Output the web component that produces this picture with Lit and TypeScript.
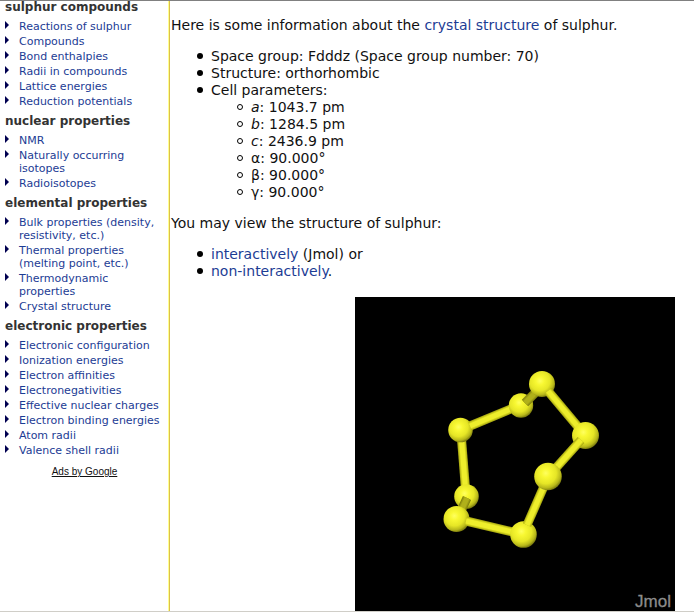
import { LitElement, html, css, svg } from "lit";
import { customElement } from "lit/decorators.js";

const SECTIONS = [
  {
    title: "sulphur compounds",
    links: ["Reactions of sulphur", "Compounds", "Bond enthalpies", "Radii in compounds", "Lattice energies", "Reduction potentials"],
  },
  {
    title: "nuclear properties",
    links: ["NMR", "Naturally occurring isotopes", "Radioisotopes"],
  },
  {
    title: "elemental properties",
    links: ["Bulk properties (density, resistivity, etc.)", "Thermal properties (melting point, etc.)", "Thermodynamic properties", "Crystal structure"],
  },
  {
    title: "electronic properties",
    links: ["Electronic configuration", "Ionization energies", "Electron affinities", "Electronegativities", "Effective nuclear charges", "Electron binding energies", "Atom radii", "Valence shell radii"],
  },
];

@customElement("side-nav")
class SideNav extends LitElement {
  static styles = css`
    :host { display: block; }
    .title {
      margin: 6px 0;
      padding-left: 5px;
      font-size: 12px;
      line-height: 14px;
      font-weight: bold;
      color: #333;
    }
    .section:first-child .title { margin-top: -1px; }
    .list {
      display: flex;
      flex-direction: column;
      gap: 2px;
      margin: 0;
      padding: 0 5px;
      list-style: none;
      font-size: 11px;
      line-height: 13px;
    }
    .item { display: flex; gap: 10px; }
    .arrow { flex: none; width: 4px; height: 8px; margin-top: 1px; fill: #000050; }
    a { color: #1c3c94; text-decoration: none; }
    .ads { margin: 9px 0 0; text-align: center; font: 10px/12px "Liberation Sans", Arial, sans-serif; }
    .ads a { color: #111; text-decoration: underline; }
  `;
  render() {
    return html`<nav>
        ${SECTIONS.map(
          (s) => html`<section class="section">
            <h2 class="title">${s.title}</h2>
            <ul class="list">
              ${s.links.map(
                (l) => html`<li class="item">
                  <svg class="arrow" viewBox="0 0 4 8" aria-hidden="true"><path d="M0 0L4 4L0 8Z" /></svg>
                  <a href="#">${l}</a>
                </li>`
              )}
            </ul>
          </section>`
        )}
      </nav>
      <p class="ads"><a href="#">Ads by Google</a></p>`;
  }
}

type Point = [number, number];

@customElement("molecule-view")
class MoleculeView extends LitElement {
  static styles = css`
    :host { display: block; max-width: 320px; flex: 1; }
    .scene { display: block; width: 100%; background: #000; }
    .label { font: 17px "Liberation Sans", Arial, sans-serif; fill: #8c8c8c; stroke: #8c8c8c; stroke-width: 0.3; }
  `;
  atom([x, y]: Point, r: number) {
    return svg`<circle cx=${x} cy=${y} r=${r} fill="url(#ball)" />`;
  }
  bond([x1, y1]: Point, [x2, y2]: Point, w: number, tones = ["#b0b014", "#d2d21e", "#eeee2c"]) {
    return tones.map(
      (tone, i) => svg`<line x1=${x1} y1=${y1} x2=${x2} y2=${y2} stroke=${tone} stroke-width=${w - i * 2} />`
    );
  }
  render() {
    const shaded = ["#84840e", "#9c9c14", "#b0b01a"];
    // Painted from the farthest atom to the nearest one.
    return html`<svg class="scene" viewBox="0 0 320 314" role="img" aria-label="Ring of eight sulphur atoms">
      <defs>
        <radialGradient id="ball" cx="0.42" cy="0.38" r="0.64">
          <stop offset="0" stop-color="#ffff60" />
          <stop offset="0.25" stop-color="#f8f832" />
          <stop offset="0.6" stop-color="#e6e626" />
          <stop offset="0.84" stop-color="#b8b81a" />
          <stop offset="1" stop-color="#74740e" />
        </radialGradient>
      </defs>
      ${this.bond([106.5, 142], [110.5, 192], 9)}
      ${this.atom([111.5, 199.5], 12.3)}
      ${this.bond([112, 201], [106, 214], 9, shaded)}
      ${this.atom([105.5, 133], 12.3)}
      ${this.bond([115, 129], [158, 111], 9)}
      ${this.atom([166, 108.5], 12.2)}
      ${this.bond([170, 106], [184, 92], 9, shaded)}
      ${this.atom([101.5, 222], 13)}
      ${this.bond([111, 224], [162, 236], 9)}
      ${this.atom([168.5, 237.5], 13.3)}
      ${this.bond([172, 228], [190, 187], 9)}
      ${this.atom([187, 87], 13)}
      ${this.bond([193, 94], [224, 131], 9)}
      ${this.atom([230.5, 138.5], 13.5)}
      ${this.bond([226, 143], [200, 172], 9)}
      ${this.atom([193, 179.5], 13.8)}
      <text class="label" x="316" y="310" text-anchor="end">Jmol</text>
    </svg>`;
  }
}

@customElement("app-root")
class AppRoot extends LitElement {
  static styles = css`
    :host {
      display: flex;
      box-sizing: border-box;
      min-height: 100vh;
      border-top: 1px solid #808080;
      border-bottom: 1px solid #d0cec8;
      background: #fff;
      color: #111;
      font-family: Verdana, "DejaVu Sans", sans-serif;
    }
    .side {
      flex: 0 0 169px;
      border-right: 1px solid #dcc04c;
      box-shadow: inset -1px 0 #ffff8c;
    }
    .main { flex: 1; min-width: 0; padding: 16px 0 0 1px; font-size: 14px; line-height: 17px; }
    a { color: #1c3c94; text-decoration: none; }
    p { margin: 0; }
    .list { margin: 14px 0; padding-left: 40px; list-style: none; }
    .sub { margin: 0; }
    .list li::before {
      content: "";
      display: inline-block;
      box-sizing: border-box;
      width: 6px;
      height: 6px;
      margin: 0 8px 0 -14px;
      border-radius: 50%;
      background: #000;
      vertical-align: 2px;
    }
    .list .sub li::before { border: 1px solid #000; background: #fff; }
    .figure { display: flex; justify-content: flex-end; margin: 17px 19px 0; }
  `;
  render() {
    const cell = ["1043.7 pm", "1284.5 pm", "2436.9 pm"];
    return html`<side-nav class="side"></side-nav>
      <main class="main">
        <p>Here is some information about the <a href="#">crystal structure</a> of sulphur.</p>
        <ul class="list">
          <li>Space group: Fdddz (Space group number: 70)</li>
          <li>Structure: orthorhombic</li>
          <li>Cell parameters:
            <ul class="list sub">
              ${["a", "b", "c"].map((n, i) => html`<li><i>${n}</i>: ${cell[i]}</li>`)}
              ${["α", "β", "γ"].map((n) => html`<li>${n}: 90.000°</li>`)}
            </ul>
          </li>
        </ul>
        <p>You may view the structure of sulphur:</p>
        <ul class="list">
          <li><a href="#">interactively</a> (Jmol) or</li>
          <li><a href="#">non-interactively</a>.</li>
        </ul>
        <div class="figure"><molecule-view></molecule-view></div>
      </main>`;
  }
}
